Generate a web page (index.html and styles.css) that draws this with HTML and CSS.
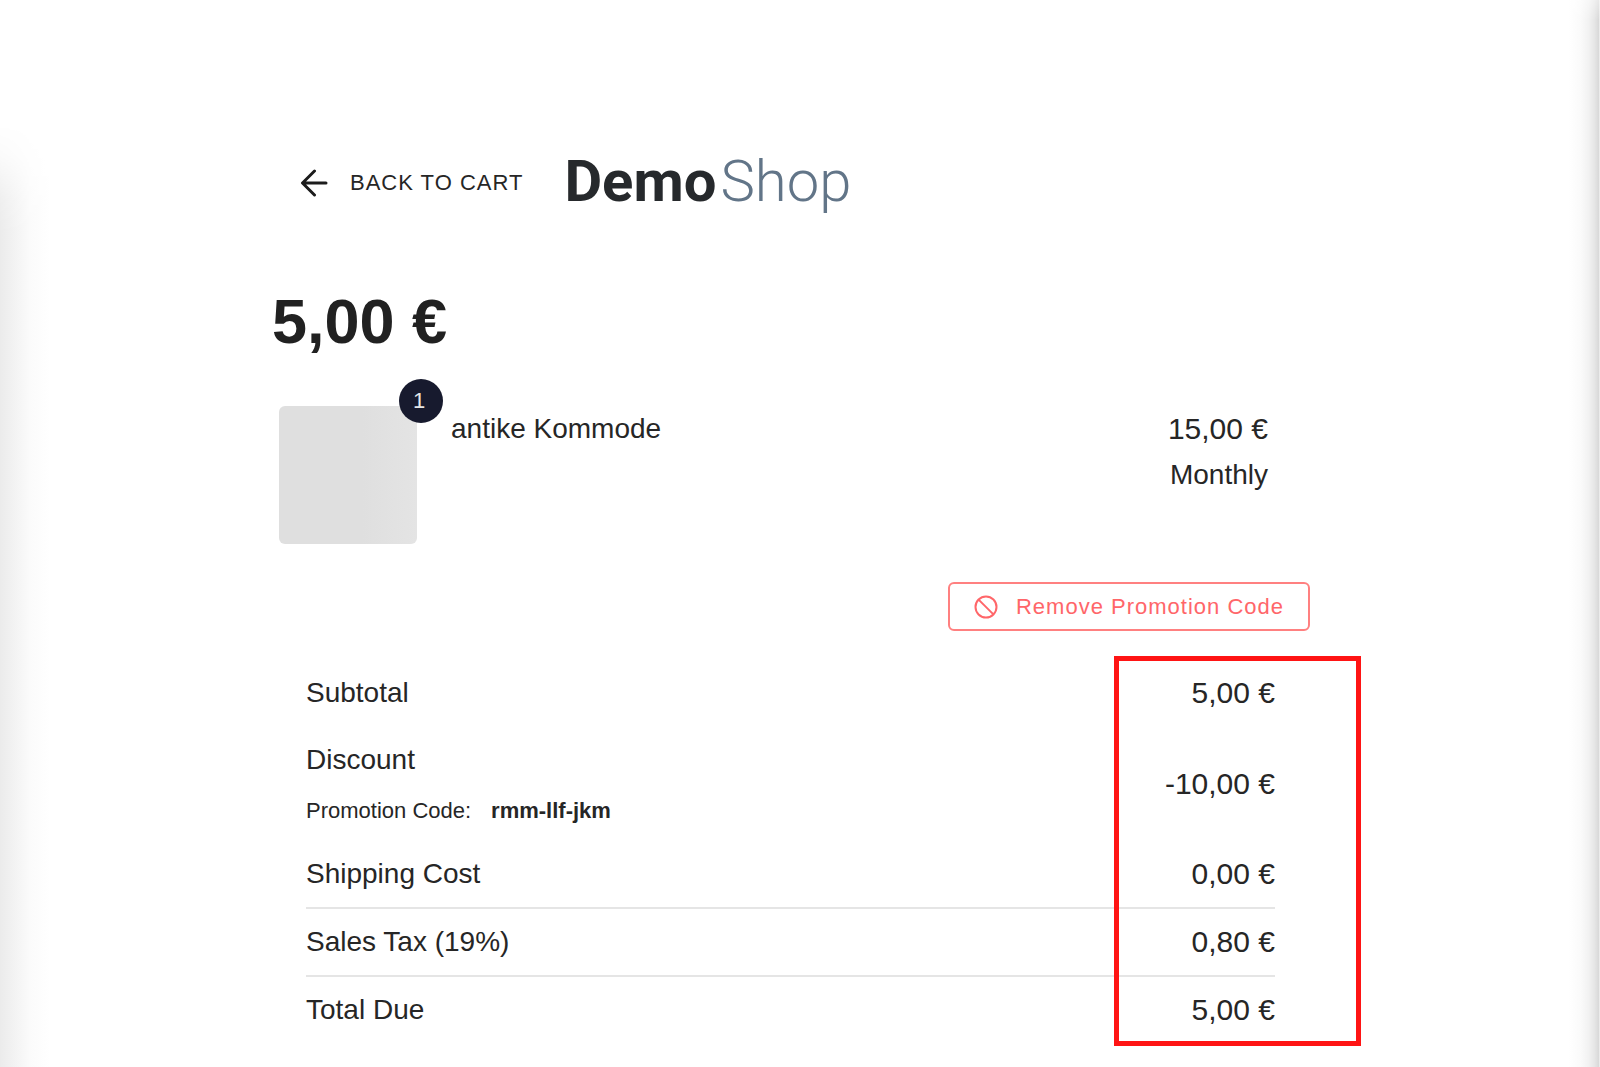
FILE: index.html
```
<!DOCTYPE html>
<html lang="en">
<head>
<meta charset="utf-8">
<meta name="viewport" content="width=device-width, initial-scale=1">
<title>Demo Shop checkout</title>
<link rel="stylesheet" href="styles.css">
</head>
<body>
<main class="checkout">
  <header class="header">
    <a class="back" href="#">
      <svg class="back-icon" viewBox="0 0 28 28" aria-hidden="true"><path d="M26 14H3M14.500 2L2.500 14L14.500 26"/></svg>
      BACK TO CART
    </a>
    <div class="logo"><span class="logo-strong">Demo</span><span class="logo-light">Shop</span></div>
  </header>

  <h1 class="amount">5,00 €</h1>

  <section class="item">
    <div class="thumb"><span class="badge">1</span></div>
    <div class="item-name">antike Kommode</div>
    <div class="item-price">
      <div class="money">15,00 €</div>
      <div>Monthly</div>
    </div>
  </section>

  <div class="actions">
    <button class="remove" type="button">
      <svg class="remove-icon" viewBox="0 0 24 24" aria-hidden="true"><circle cx="12" cy="12" r="10.500"/><path d="M4.600 4.600L19.400 19.400"/></svg>
      Remove Promotion Code
    </button>
  </div>

  <section class="summary">
    <table class="totals">
      <tbody>
        <tr><th scope="row">Subtotal</th><td class="money">5,00 €</td></tr>
        <tr>
          <th class="discount" scope="row">
            <div class="discount-label">Discount</div>
            <div class="promo"><span>Promotion Code:</span><strong>rmm-llf-jkm</strong></div>
          </th>
          <td class="money">-10,00 €</td>
        </tr>
        <tr class="ruled"><th scope="row">Shipping Cost</th><td class="money">0,00 €</td></tr>
        <tr class="ruled"><th scope="row">Sales Tax (19%)</th><td class="money">0,80 €</td></tr>
        <tr><th scope="row">Total Due</th><td class="money">5,00 €</td></tr>
      </tbody>
    </table>
    <div class="highlight"></div>
  </section>
</main>
</body>
</html>
```
FILE: styles.css
```
* {
  box-sizing: border-box;
}

body {
  position: relative;
  min-height: 100vh;
  margin: 0;
  background: #fff;
  color: #262626;
  font-family: "Liberation Sans", Arial, sans-serif;
  font-size: 28px;
  line-height: 44px;
}

/* Soft shadows of the neighbouring panels at the window edges */
body::before,
body::after {
  content: "";
  position: absolute;
  bottom: 0;
}

body::before {
  top: 124px;
  left: 0;
  width: 50px;
  background: linear-gradient(90deg, #ebebeb, #f3f3f3 30%, #fbfbfb 60%, #fff);
  mask-image: linear-gradient(transparent, rgba(0, 0, 0, 0.2) 30px, rgba(0, 0, 0, 0.8) 75px, #000 110px);
}

body::after {
  top: 0;
  right: 0;
  width: 30px;
  border-right: 1px solid #ebebeb;
  background: linear-gradient(270deg, #d8d8d8, #e6e6e6 15%, #f2f2f2 35%, #fafafa 60%, #fff);
  mask-image: linear-gradient(rgba(0, 0, 0, 0.6), #000 20px);
}

.checkout {
  width: 65%;
  margin: 0 18% 0 17%;
  padding: 149px 0 20px;
}

.header {
  display: flex;
  align-items: center;
  gap: 41px;
  padding-left: 28px;
}

.back {
  display: flex;
  align-items: center;
  gap: 22px;
  color: #262626;
  font-size: 22px;
  letter-spacing: 1px;
  text-decoration: none;
  white-space: nowrap;
}

.back-icon {
  width: 28px;
  height: 28px;
  fill: none;
  stroke: #1c1c1c;
  stroke-width: 3;
  stroke-linecap: round;
  stroke-linejoin: round;
}

.logo {
  display: flex;
  gap: 4px;
  padding-bottom: 4px;
  font-family: Roboto, sans-serif;
  font-size: 58px;
  line-height: 64px;
}

.logo-strong {
  color: #26292c;
  font-weight: 700;
}

.logo-light {
  color: #627588;
  font-weight: 350;
}

.amount {
  margin: 68px 0 49px;
  color: #212121;
  font-size: 63px;
  font-weight: 700;
  line-height: 72px;
}

.item {
  display: flex;
  gap: 34px;
  padding: 0 44px 0 7px;
  line-height: 46px;
}

.thumb {
  position: relative;
  flex: none;
  width: 138px;
  height: 138px;
  border-radius: 6px;
  background: linear-gradient(90deg, #dfdfdf 60%, #e4e4e4);
}

.badge {
  position: absolute;
  top: -27px;
  right: -26px;
  width: 44px;
  height: 44px;
  padding-right: 4px;
  border-radius: 50%;
  background: #171a2e;
  color: #e6e6e6;
  font-size: 22px;
  line-height: 44px;
  text-align: center;
}

.item-name {
  flex: 1;
}

.item-price {
  text-align: right;
}

.money {
  font-size: 30px;
}

.actions {
  display: flex;
  justify-content: flex-end;
  margin: 38px 2px 29px 0;
}

.remove {
  display: flex;
  align-items: center;
  gap: 18px;
  height: 49px;
  padding: 0 24px;
  border: 2px solid #ff8080;
  border-radius: 6px;
  background: #fff;
  color: #ff6669;
  font-family: inherit;
  font-size: 22px;
  letter-spacing: 1px;
  white-space: nowrap;
}

.remove-icon {
  width: 24px;
  height: 24px;
  fill: none;
  stroke: #ff6669;
  stroke-width: 2;
}

.summary {
  position: relative;
  margin: 0 37px 0 34px;
}

.totals {
  width: 100%;
  border-spacing: 0;
}

.totals th,
.totals td {
  height: 66px;
  padding: 0;
  font-weight: 400;
  text-align: left;
}

.totals td {
  text-align: right;
}

.totals .ruled th,
.totals .ruled td {
  height: 68px;
  border-bottom: 2px solid #e5e5e5;
}

.totals .discount {
  padding: 14px 0;
}

.discount-label {
  line-height: 40px;
}

.promo {
  display: flex;
  gap: 20px;
  margin-top: 15px;
  font-size: 22px;
  line-height: 32px;
}

/* Frame drawn over the value column */
.highlight {
  position: absolute;
  top: -4px;
  right: -86px;
  bottom: -3px;
  width: 247px;
  border: 5px solid #ff1414;
  pointer-events: none;
}
```
